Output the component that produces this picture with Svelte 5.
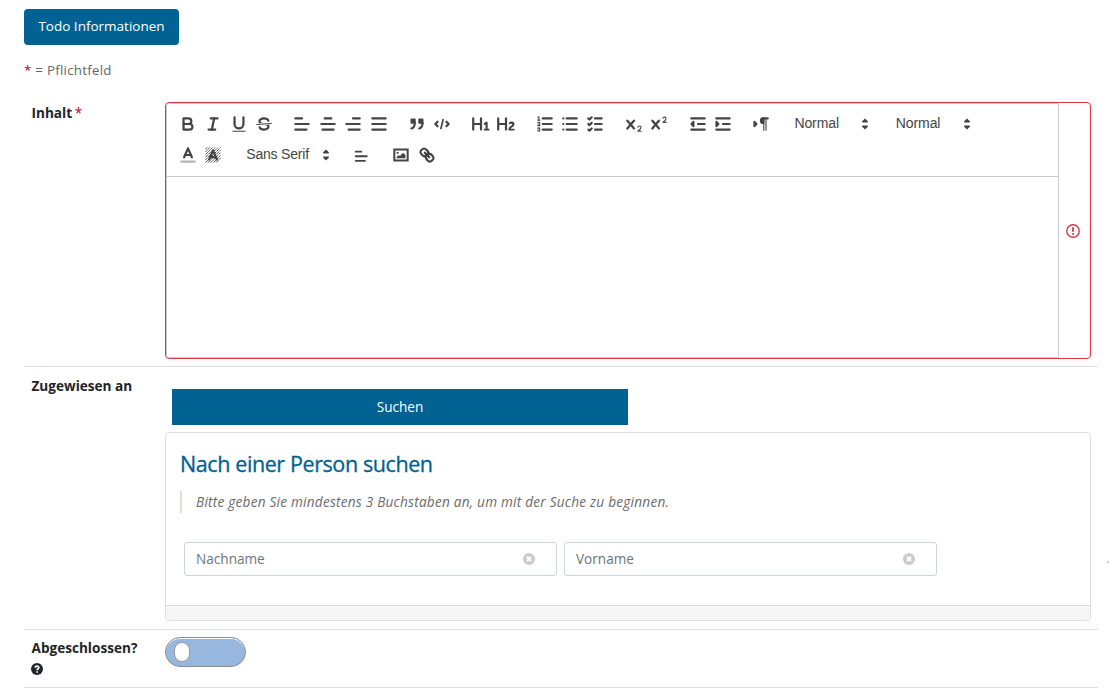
<script>
  const line = (x1, y1, x2, y2) => `<path class="s" d="M${x1},${y1}L${x2},${y2}"/>`;
  const fill = (d) => `<path class="f" d="${d}"/>`;
  const stroke = (d, c = 's') => `<path class="${c}" d="${d}"/>`;
  const solid = (d) => `<path class="s f" d="${d}"/>`;
  const cross = 'M9.65,5.241a1,1,0,0,0-1.409.108L6,7.964,3.759,5.349A1,1,0,0,0,2.192,6.59178Q2.21541,6.6213,2.241,6.649L4.684,9.5,2.241,12.35A1,1,0,0,0,3.71,13.70722q0.02557-.02768.049-0.05722L6,11.036,8.241,13.65a1,1,0,1,0,1.567-1.24277Q9.78459,12.3777,9.759,12.35L7.316,9.5,9.759,6.651A1,1,0,0,0,9.65,5.241Z';

  const alignLeft = line(3, 9, 15, 9) + line(3, 14, 13, 14) + line(3, 4, 9, 4);
  let hatch = '';
  for (let i = -12; i < 12; i += 2.4) {
    const x1 = Math.max(2.5, 2.5 + i), x2 = Math.min(15.5, 15.5 + i);
    hatch += `M${x1},${18 + i - x1}L${x2},${18 + i - x2}`;
  }

  const row1 = [
    [
      stroke('M5,4H9.5A2.5,2.5,0,0,1,9.5,9H5Z') + stroke('M5,9h5.5A2.5,2.5,0,0,1,10.5,14H5Z'),
      line(7, 4, 13, 4) + line(5, 14, 11, 14) + line(8, 14, 10, 4),
      stroke('M5,3V9a4.012,4.012,0,0,0,4,4H9a4.012,4.012,0,0,0,4-4V3') + fill('M3.5,15h11a.5,.5,0,0,1,0,1h-11a.5,.5,0,0,1,0-1Z'),
      stroke('M15.5,8.5L2.5,9.5', 's thin') +
        fill('M9.007,8C6.542,7.791,6,7.519,6,6.5,6,5.792,7.283,5,9,5c1.571,0,2.765.679,2.969,1.309a1,1,0,0,0,1.9-.617C13.356,4.106,11.354,3,9,3,6.2,3,4,4.538,4,6.5a3.2,3.2,0,0,0,.5,1.843Z') +
        fill('M8.984,10C11.457,10.208,12,10.479,12,11.5c0,0.708-1.283,1.5-3,1.5-1.571,0-2.765-.679-2.969-1.309a1,1,0,1,0-1.9.617C4.644,13.894,6.646,15,9,15c2.8,0,5-1.538,5-3.5a3.2,3.2,0,0,0-.5-1.843Z')
    ],
    [
      alignLeft,
      line(15, 9, 3, 9) + line(14, 14, 4, 14) + line(12, 4, 6, 4),
      line(15, 9, 3, 9) + line(15, 14, 5, 14) + line(15, 4, 9, 4),
      line(15, 9, 3, 9) + line(15, 14, 3, 14) + line(15, 4, 3, 4)
    ],
    [
      solid('M4,5h3v3h-3Z') + solid('M11,5h3v3h-3Z') + stroke('M7,8c0,4.031-3,5-3,5') + stroke('M14,8c0,4.031-3,5-3,5'),
      stroke('M5,7L3,9L5,11') + stroke('M13,7L15,9L13,11') + stroke('M10,5L8,13', 's mid')
    ],
    [
      fill('M10,4V14a1,1,0,0,1-2,0V10H3v4a1,1,0,0,1-2,0V4A1,1,0,0,1,3,4V8H8V4a1,1,0,0,1,2,0Zm6.06787,9.209H14.98975V7.59863a.54085.54085,0,0,0-.605-.60547h-.62744a1.01119,1.01119,0,0,0-.748.29688L11.645,8.56641a.5435.5435,0,0,0-.022.8584l.28613.30762a.53861.53861,0,0,0,.84717.0332l.09912-.08789a1.2137,1.2137,0,0,0,.2417-.35254h.02246s-.01123.30859-.01123.60547V13.209H12.041a.54085.54085,0,0,0-.605.60547v.43945a.54085.54085,0,0,0,.605.60547h4.02686a.54085.54085,0,0,0,.605-.60547v-.43945A.54085.54085,0,0,0,16.06787,13.209Z'),
      fill('M16.73975,13.81445v.43945a.54085.54085,0,0,1-.605.60547H11.855a.58392.58392,0,0,1-.64893-.60547V14.0127c0-2.90527,3.39941-3.42187,3.39941-4.55469a.77675.77675,0,0,0-.84717-.78125,1.17684,1.17684,0,0,0-.83594.38477c-.2749.26367-.561.374-.85791.13184l-.4292-.34082c-.30811-.24219-.38525-.51758-.1543-.81445a2.97155,2.97155,0,0,1,2.45361-1.17676,2.45393,2.45393,0,0,1,2.68408,2.40918c0,2.45312-3.1792,2.92676-3.27832,3.93848h2.79443A.54085.54085,0,0,1,16.73975,13.81445ZM9,3A.99974.99974,0,0,0,8,4V8H3V4A1,1,0,0,0,1,4V14a1,1,0,0,0,2,0V10H8v4a1,1,0,0,0,2,0V4A.99974.99974,0,0,0,9,3Z')
    ],
    [
      line(7, 4, 15, 4) + line(7, 9, 15, 9) + line(7, 14, 15, 14) + stroke('M2.5,5.5H4.5', 's thin') +
        fill('M3.5,6A0.5,0.5,0,0,1,3,5.5V3.085l-0.276.138A0.5,0.5,0,0,1,2.053,3c-0.124-.247-0.023-0.324.224-0.447l1-.5A0.5,0.5,0,0,1,4,2.5v3A0.5,0.5,0,0,1,3.5,6Z') +
        stroke('M4.5,10.5h-2c0-.234,1.85-1.076,1.85-2.234A0.959,0.959,0,0,0,2.5,8.156', 's thin') +
        stroke('M2.5,14.846a0.959,0.959,0,0,0,1.85-.109A0.7,0.7,0,0,0,3.75,14a0.688,0.688,0,0,0,.6-0.736,0.959,0.959,0,0,0-1.85-.109', 's thin'),
      [4, 9, 14].map((y) => line(6, y, 15, y) + line(3, y, 3.01, y)).join(''),
      [4, 9, 14].map((y) => line(9, y, 15, y) + stroke(`M3,${y}l1,1l2,-2`)).join('')
    ],
    [
      fill('M15.5,15H13.861a3.858,3.858,0,0,0,1.914-2.975,1.8,1.8,0,0,0-1.6-1.751A1.921,1.921,0,0,0,12.021,11.7a0.50013,0.50013,0,1,0,.957.291h0a0.914,0.914,0,0,1,1.053-.725,0.81,0.81,0,0,1,.744.762c0,1.076-1.16971,1.86982-1.93971,2.43082A1.45639,1.45639,0,0,0,12,15.5a0.5,0.5,0,0,0,.5.5h3A0.5,0.5,0,0,0,15.5,15Z') + fill(cross),
      fill('M15.5,7H13.861a4.015,4.015,0,0,0,1.914-2.975,1.8,1.8,0,0,0-1.6-1.751A1.922,1.922,0,0,0,12.021,3.7a0.5,0.5,0,1,0,.957.291,0.917,0.917,0,0,1,1.053-.725,0.81,0.81,0,0,1,.744.762c0,1.077-1.164,1.925-1.934,2.486A1.423,1.423,0,0,0,12,7.5a0.5,0.5,0,0,0,.5.5h3A0.5,0.5,0,0,0,15.5,7Z') + fill(cross)
    ],
    [
      line(3, 14, 15, 14) + line(3, 4, 15, 4) + line(9, 9, 15, 9) + solid('M5,7V11L3,9Z'),
      line(3, 14, 15, 14) + line(3, 4, 15, 4) + line(9, 9, 15, 9) + solid('M3,7V11L5,9Z')
    ],
    [
      solid('M3,11L5,9L3,7Z') + line(15, 4, 11, 4) + fill('M11,3a3,3,0,0,0,0,6h1V3H11Z') + fill('M11,4h1v11h-1Z') + fill('M13,4h1v11h-1Z')
    ]
  ];
  const colors = [
    stroke('M3,15H15', 's faint') + stroke('M5.5,11L9,3L12.5,11') + line(11.63, 9, 6.38, 9),
    stroke(hatch, 's hatch') + stroke('M5.5,13L9,5L12.5,13') + line(11.63, 11, 6.38, 11)
  ];
  const inserts = [
    stroke('M3,4H15V14H3Z', 's frame') + '<circle class="f" cx="6" cy="7" r="1"/>' + fill('M5,12V11L7,9L8,10L11,7L13,9V12Z'),
    line(7, 7, 11, 11) +
      stroke('M8.9,4.577a3.476,3.476,0,0,1,.36,4.679A3.476,3.476,0,0,1,4.577,8.9C3.185,7.5,2.035,6.4,4.217,4.217S7.5,3.185,8.9,4.577Z') +
      stroke('M13.423,9.1a3.476,3.476,0,0,0-4.679-.36,3.476,3.476,0,0,0,.36,4.679c1.392,1.392,2.5,2.542,4.679.36S14.815,10.5,13.423,9.1Z')
  ];
</script>

{#snippet icon(body)}
  <button type="button" class="tool"><svg viewBox="0 0 18 18">{@html body}</svg></button>
{/snippet}

{#snippet picker(label, wide)}
  <span class="picker" class:wide>
    <span>{label}</span>
    <svg viewBox="0 0 18 18"><path class="s f" d="M7,11L9,13L11,11Z" /><path class="s f" d="M7,7L9,5L11,7Z" /></svg>
  </span>
{/snippet}

{#snippet field(name)}
  <div class="field">
    <span>{name}</span>
    <svg width="12" height="12" viewBox="0 0 12 12"><circle cx="6" cy="6" r="6" fill="#ccc" /><path d="M4,4L8,8M8,4L4,8" stroke="#fff" stroke-width="1.9" /></svg>
  </div>
{/snippet}

<main>
  <button type="button" class="info">Todo Informationen</button>
  <p class="legend"><b>*</b> = Pflichtfeld</p>

  <section class="row first">
    <div class="label">Inhalt <b>*</b></div>
    <div class="editor">
      <div class="quill">
        <div class="toolbar">
          <div class="line">
            {#each row1 as group}
              <div class="group">{#each group as g}{@render icon(g)}{/each}</div>
            {/each}
            {@render picker('Normal', false)}
            {@render picker('Normal', false)}
          </div>
          <div class="line">
            <div class="group">{#each colors as g}{@render icon(g)}{/each}</div>
            {@render picker('Sans Serif', true)}
            <div class="group small">{@render icon(alignLeft)}</div>
            <div class="group last">{#each inserts as g}{@render icon(g)}{/each}</div>
          </div>
        </div>
        <div class="body"></div>
      </div>
      <svg class="alert" width="14" height="14" viewBox="0 0 14 14"><circle cx="7" cy="7" r="6.2" fill="none" stroke="#dc3545" stroke-width="1.4" /><path d="M7,3.2V7.8M7,9V10.7" stroke="#dc3545" stroke-width="1.8" /></svg>
    </div>
  </section>

  <section class="row second">
    <div class="label">Zugewiesen an</div>
    <div class="content">
      <button type="button" class="search">Suchen</button>
      <div class="card">
        <div class="card-body">
          <h2>Nach einer Person suchen</h2>
          <p class="hint">Bitte geben Sie mindestens 3 Buchstaben an, um mit der Suche zu beginnen.</p>
          <div class="fields">{@render field('Nachname')}{@render field('Vorname')}</div>
        </div>
        <div class="card-foot"></div>
      </div>
    </div>
  </section>

  <section class="row third">
    <div class="label">
      Abgeschlossen?
      <svg width="12" height="12" viewBox="0 0 12 12"><circle cx="6" cy="6" r="6" fill="#212529" /><path d="M4.1,4.7C4.2,2.5,8,2.6,7.9,4.7C7.8,5.8,6.1,5.8,6.1,7.2M6.1,8.2V9.7" fill="none" stroke="#fff" stroke-width="1.6" /></svg>
    </div>
    <div class="switch"><i></i></div>
  </section>
  <svg class="corner" width="3" height="3" viewBox="0 0 3 3"><path d="M0,3L3,0V3Z" fill="#ccc" /></svg>
</main>

<style>
  :global(body) { background: #fff; overflow: hidden; }
  main {
    box-sizing: border-box;
    position: relative;
    width: 1109px;
    height: 699px;
    padding: 9px 11px 0 24px;
    font: 14px/21px "Open Sans", "Noto Sans", sans-serif;
    color: #212529;
  }
  main :global(*) { box-sizing: border-box; }
  button { border: 0; padding: 0; font: inherit; }
  .info {
    display: block;
    width: 155px;
    height: 36px;
    padding-bottom: 2px;
    border-radius: 4px;
    background: #006292;
    color: #fff;
    font-size: 13.5px;
  }
  .legend { margin: 15px 0 0; color: #666; font-size: 13.3px; letter-spacing: 0.27px; }
  b { color: #b5002a; font-weight: 400; }
  .row { display: flex; border-bottom: 1px solid #dedede; width: 1074px; }
  .first { margin-top: 13px; height: 273px; padding-top: 8px; }
  .first b { margin-left: -1px; }
  .second { height: 263px; }
  .third { height: 58px; padding-top: 7px; }
  .label { width: 141px; flex: none; padding-left: 7.5px; font-weight: 700; font-size: 13.6px; }
  .second .label { padding-top: 8px; }
  .label svg { display: block; margin-top: 5px; margin-left: -0.5px; }
  .editor {
    display: flex;
    align-items: center;
    width: 926px;
    height: 257px;
    border: 1px solid #dc3545;
    border-radius: 4px;
  }
  .quill { width: 893px; height: 255px; border: 1px solid #ccc; border-radius: 3px 0 0 3px; }
  .toolbar { height: 73px; padding: 4px 8px 0; border-bottom: 1px solid #ccc; }
  .line { display: flex; height: 31px; gap: 12.9px; align-items: center; }
  .group { display: flex; }
  .tool { width: 25.45px; height: 24px; display: flex; align-items: center; justify-content: center; background: none; }
  .tool svg { width: 20px; height: 20px; }
  .small svg { width: 16.5px; height: 16.5px; position: relative; top: 2px; }
  .last { margin-left: 1.5px; }
  .picker {
    display: flex;
    align-items: center;
    justify-content: space-between;
    width: 88.6px;
    padding-left: 7.5px;
    font: 14px/22px "Liberation Sans", Arial, sans-serif;
    letter-spacing: -0.1px;
    color: #444;
  }
  .picker span { padding-bottom: 2px; }
  .picker.wide { width: 97px; letter-spacing: -0.2px; }
  .picker svg { width: 20px; height: 20px; }
  .quill :global(.s) { stroke: #444; stroke-width: 2; fill: none; stroke-linecap: round; stroke-linejoin: round; }
  .quill :global(.f) { fill: #444; }
  .quill :global(.s.f) { stroke-width: 1.7; }
  .quill :global(.picker .s) { stroke-width: 1.4; }
  .quill :global(.thin) { stroke-width: 1; }
  .quill :global(.mid) { stroke-width: 1.5; }
  .quill :global(.frame) { stroke-width: 1.8; stroke-linejoin: miter; }
  .quill :global(.faint) { opacity: 0.4; }
  .quill :global(.hatch) { stroke-width: 0.9; stroke-dasharray: 2.2 1.4; }
  .alert { margin-left: 7px; }
  .content { width: 926px; padding-top: 22px; }
  .search { display: block; width: 456px; height: 36px; margin-left: 7px; padding-bottom: 2px; background: #006292; color: #fff; font-size: 13.6px; }
  .card { margin-top: 7px; height: 189px; border: 1px solid #dedede; border-radius: 4px; overflow: hidden; }
  .card-body { height: 172px; padding: 15px 14px; }
  .card-foot { height: 15px; border-top: 1px solid #d8d8d8; background: #f6f6f6; }
  h2 {
    margin: 0;
    font-size: 21.5px;
    line-height: 32px;
    font-weight: 500;
    letter-spacing: -0.4px;
    -webkit-text-stroke: 0.3px #006292;
    color: #006292;
  }
  .hint {
    margin: 11px 0 0;
    height: 22px;
    line-height: 22px;
    border-left: 2px solid #e0e0da;
    padding-left: 14px;
    font-style: italic;
    font-size: 13.6px;
    letter-spacing: 0.235px;
    color: #6b6b6b;
  }
  .fields { display: flex; gap: 7px; margin: 29px 0 0 4px; }
  .field {
    display: flex;
    align-items: center;
    justify-content: space-between;
    width: 373px;
    height: 34px;
    padding: 0 21px 1px 11px;
    border: 1px solid #ced4da;
    border-radius: 3px;
    color: #6c757d;
    font-size: 13.6px;
  }
  .switch {
    width: 81px;
    height: 30px;
    border: 1px solid #8e8e8e;
    border-radius: 15px;
    background: #97b7df;
    box-shadow: inset 0 1px 0 #fff;
    padding: 4px 0 0 8px;
  }
  .switch i { display: block; width: 16px; height: 20px; border: 1px solid #999; border-radius: 8px; background: #fff; }
  .corner { position: absolute; right: 0; top: 560px; }
</style>
